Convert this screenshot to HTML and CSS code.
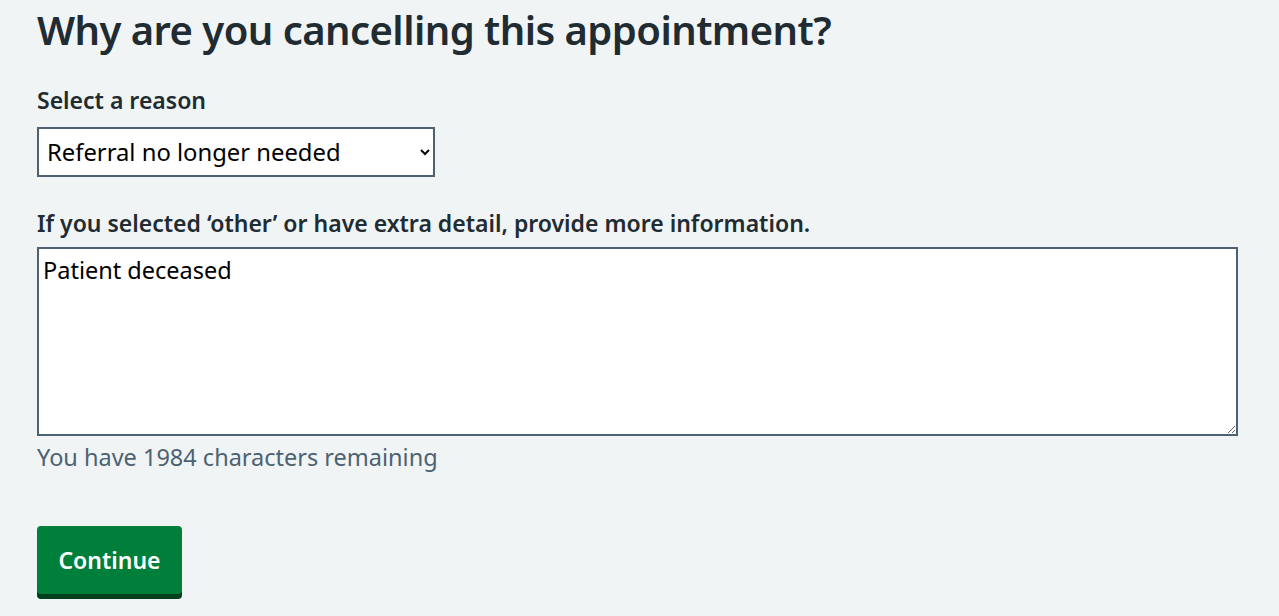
FILE: index.html
```html
<!DOCTYPE html>
<html lang="en">
<head>
<meta charset="utf-8">
<title>Why are you cancelling this appointment?</title>
<link rel="stylesheet" href="styles.css">
</head>
<body>
<main class="page">
  <form class="form">
    <h1 class="heading">Why are you cancelling this appointment?</h1>
    <div class="field field-select">
      <label class="label" for="reason">Select a reason</label>
      <select class="select" id="reason" name="reason">
        <option selected>Referral no longer needed</option>
        <option>Patient deceased</option>
        <option>Other</option>
      </select>
    </div>
    <div class="field field-text">
      <label class="label" for="detail">If you selected ‘other’ or have extra detail, provide more information.</label>
      <textarea class="textarea" id="detail" name="detail">Patient deceased</textarea>
      <div class="hint">You have 1984 characters remaining</div>
    </div>
    <div class="actions">
      <button class="button" type="submit">Continue</button>
    </div>
  </form>
</main>
</body>
</html>
```
FILE: styles.css
```css
html, body {
  margin: 0;
  padding: 0;
  background: #f0f4f5;
}
body {
  font-family: "Noto Sans", "Open Sans", "Liberation Sans", sans-serif;
  color: #212b32;
}
.page {
  padding: 5px 0 0 37px;
}
.form {
  display: flex;
  flex-direction: column;
  align-items: flex-start;
  width: 1201px;
}
.heading {
  margin: 0;
  font-size: 40px;
  line-height: 50px;
  letter-spacing: -0.55px;
  font-weight: 600;
}
.field {
  display: flex;
  flex-direction: column;
  align-items: flex-start;
  width: 100%;
}
.field-select {
  margin-top: 30px;
}
.field-text {
  margin-top: 31px;
}
.label {
  font-size: 23px;
  line-height: 30px;
  font-weight: 600;
}
.select {
  margin-top: 12px;
  width: 398px;
  height: 50px;
  border: 2px solid #4c6272;
  border-radius: 0;
  background: #ffffff;
  color: #000;
  font-family: "Noto Sans", "Open Sans", sans-serif;
  font-size: 23.8px;
  padding: 0 6px 0 4px;
}
.textarea {
  margin-top: 9px;
  box-sizing: border-box;
  width: 1201px;
  height: 189px;
  border: 2px solid #4c6272;
  border-radius: 0;
  background: #ffffff;
  color: #000;
  font-family: "Noto Sans", "Open Sans", sans-serif;
  font-size: 23.5px;
  line-height: 30px;
  padding: 6px 4px 5px;
  resize: vertical;
}
.hint {
  margin-top: 6px;
  font-size: 23.5px;
  line-height: 30px;
  color: #4c6272;
}
.actions {
  margin-top: 54px;
  padding-bottom: 8px;
}
.button {
  -webkit-appearance: none;
  appearance: none;
  display: block;
  width: 145px;
  height: 68px;
  border: 0;
  border-radius: 4px;
  background: #007f3b;
  box-shadow: 0 5px 0 #00401e;
  color: #ffffff;
  font-family: "Noto Sans", "Open Sans", sans-serif;
  font-size: 23px;
  font-weight: 600;
  cursor: pointer;
}
```
